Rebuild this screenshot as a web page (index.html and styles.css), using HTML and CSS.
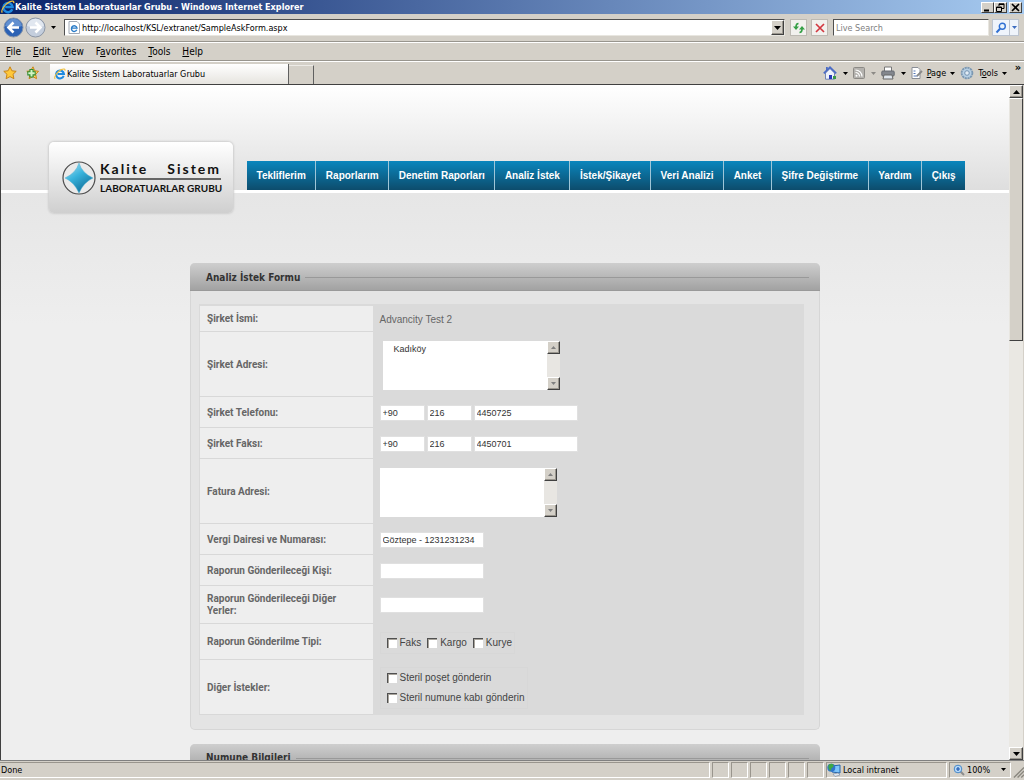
FILE: index.html
```html
<!DOCTYPE html>
<html lang="tr">
<head>
<meta charset="utf-8">
<title>Kalite Sistem Laboratuarlar Grubu</title>
<link rel="stylesheet" href="styles.css">
</head>
<body>
<svg class="defs" aria-hidden="true">
  <defs>
    <symbol id="ie" viewBox="0 0 14 14">
      <path d="M11.3 9.3A4.6 4.6 0 1 1 11.6 7H4.2" fill="none" stroke="#1d8ae0" stroke-width="2.4"/>
      <path d="M1.3 12.6C-.6 10.500 4 4 8.500 1.900c3-1.400 4.800-.9 4.200 1.300" fill="none" stroke="#f0c03c" stroke-width="1.300"/>
    </symbol>
    <symbol id="down" viewBox="0 0 7 4"><path d="M0 0h7L3.500 4z" fill="currentColor"/></symbol>
    <symbol id="up" viewBox="0 0 7 4"><path d="M0 4h7L3.500 0z" fill="currentColor"/></symbol>
  </defs>
</svg>

<header class="titlebar">
  <svg class="ico-14"><use href="#ie"/></svg>
  <span class="title-text">Kalite Sistem Laboratuarlar Grubu - Windows Internet Explorer</span>
  <button class="win-btn" aria-label="Minimize"><svg viewBox="0 0 11 9"><path d="M2 7.500h5" stroke="#000" stroke-width="2"/></svg></button>
  <button class="win-btn" aria-label="Restore"><svg viewBox="0 0 11 9"><path d="M4 3V.800h5v4.700H7M4 1.500h5M1.500 4h5v4.500h-5zM1.500 4.500h5" fill="none" stroke="#000"/></svg></button>
  <button class="win-btn win-close" aria-label="Close"><svg viewBox="0 0 11 9"><path d="M2 1l7 7M9 1L2 8" stroke="#000" stroke-width="1.600"/></svg></button>
</header>

<div class="addressbar">
  <button class="plain" aria-label="Back"><svg class="ico-21" viewBox="0 0 21 21"><circle cx="10.500" cy="10.500" r="9.500" fill="#2c62b4" stroke="#8494ac"/><path d="M2 9a8.600 8.600 0 0 1 17 0q-8 3-17 0z" fill="#86aee2" opacity=".6"/><path d="M16 10.500H6M10.500 5.500l-5 5 5 5" fill="none" stroke="#fff" stroke-width="2.600"/></svg></button>
  <button class="plain" aria-label="Forward"><svg class="ico-21" viewBox="0 0 21 21"><circle cx="10.500" cy="10.500" r="9.500" fill="#c4cedd" stroke="#8c96a6"/><path d="M2 9a8.600 8.600 0 0 1 17 0q-8 3-17 0z" fill="#eef2f8" opacity=".7"/><path d="M5 10.500h10M10.500 5.500l5 5-5 5" fill="none" stroke="#fff" stroke-width="2.600"/></svg></button>
  <button class="plain history" aria-label="Recent pages"><svg class="arrow-s"><use href="#down"/></svg></button>
  <div class="url-box">
    <svg class="ico-page" viewBox="0 0 12 13"><path d="M1 .500h8l2.500 2.500v9.500H1z" fill="#fff" stroke="#a0a8b4"/><path d="M8.800 8.800a2.800 2.800 0 1 1 .2-1.700H4" fill="none" stroke="#2a7cc8" stroke-width="1.400"/></svg>
    <input class="url" type="text" aria-label="Address" value="http://localhost/KSL/extranet/SampleAskForm.aspx">
    <button class="bevel url-drop" aria-label="Show addresses"><svg class="arrow"><use href="#down"/></svg></button>
  </div>
  <button class="tool-btn" aria-label="Refresh"><svg viewBox="0 0 12 12"><path d="M5.500 1.500Q3 1.500 3 5M6.500 10.500Q9 10.500 9 7" fill="none" stroke="#35a046" stroke-width="1.600"/><path d="M0 4.500h6L3 8zM6 7.500h6L9 4z" fill="#35a046"/></svg></button>
  <button class="tool-btn stop" aria-label="Stop"><svg viewBox="0 0 12 12"><path d="M2 2l8 8M10 2l-8 8" stroke="#d23840" stroke-width="1.700"/></svg></button>
  <input class="search" type="text" placeholder="Live Search" aria-label="Live Search">
  <div class="search-go">
    <button aria-label="Search"><svg viewBox="0 0 12 12"><circle cx="7.300" cy="4.300" r="3" fill="#e8f2fc" stroke="#2f6fd2" stroke-width="1.400"/><path d="M5 6.800L1.500 10.500" stroke="#2f6fd2" stroke-width="2"/></svg></button>
    <button class="go-drop" aria-label="Search options"><svg class="arrow-s"><use href="#down"/></svg></button>
  </div>
</div>

<nav class="menubar" aria-label="Browser menu">
  <button><u>F</u>ile</button><button><u>E</u>dit</button><button><u>V</u>iew</button><button>F<u>a</u>vorites</button><button><u>T</u>ools</button><button><u>H</u>elp</button>
</nav>

<div class="tabbar">
  <button class="plain star" aria-label="Favorites center"><svg class="ico-14" viewBox="0 0 14 14"><path d="M7 .800l1.900 4 4.300.5-3.200 3 .9 4.400L7 10.600l-3.900 2.100.9-4.400-3.200-3 4.300-.5z" fill="#ffc83a" stroke="#c98416"/></svg></button>
  <button class="plain star" aria-label="Add to favorites"><svg class="ico-14" viewBox="0 0 14 14"><path d="M8 .800l1.700 4 3.800.5-2.800 3 .8 4.400L8 10.600l-3.900 2.100.9-4.400-3.200-3 3.800-.5z" fill="#ffd768" stroke="#c98416"/><path d="M6.500 3v8.500M2.300 7.300h8.400" stroke="#2c8c30" stroke-width="4.200"/><path d="M6.500 4v6.500M3.300 7.300h6.400" stroke="#d4f4c4" stroke-width="2"/></svg></button>
  <button class="tab"><svg class="ico-12"><use href="#ie"/></svg>Kalite Sistem Laboratuarlar Grubu</button>
  <button class="new-tab" aria-label="New tab"></button>
  <div class="commands">
    <button class="cmd" aria-label="Home"><svg class="ico-14" viewBox="0 0 14 14"><path d="M2.500 7v6.200h9V7L7 2.500z" fill="#eef2fb" stroke="#7386b5"/><path d="M.800 7.300L7 1.300l6.200 6" fill="none" stroke="#4c6cc5" stroke-width="1.800"/><path d="M6 9h3v4H6z" fill="#2738ba"/><path d="M3 1h1.800v3L3 5z" fill="#4c6cc5"/><path d="M10 10h3v3h-3z" fill="#3c9a45"/></svg><svg class="arrow-s"><use href="#down"/></svg></button>
    <button class="cmd muted" aria-label="Feeds"><svg class="ico-12" viewBox="0 0 12 12"><rect x=".5" y=".5" width="11" height="11" rx="1" fill="#b4b2ae" stroke="#8c8a86"/><circle cx="3.500" cy="8.700" r="1" fill="#fff"/><path d="M2.500 5.500a4 4 0 0 1 4 4M2.500 3a6.500 6.500 0 0 1 6.500 6.500" fill="none" stroke="#fff" stroke-width="1.200"/></svg><svg class="arrow-s"><use href="#down"/></svg></button>
    <button class="cmd" aria-label="Print"><svg class="ico-14" viewBox="0 0 14 14"><path d="M3.500 5V1h7v4" fill="#fff" stroke="#777"/><rect x=".8" y="5" width="12.400" height="5" rx="1" fill="#83878e" stroke="#666a72"/><path d="M3 9h8l1 4H2z" fill="#dfe6ee" stroke="#666"/></svg><svg class="arrow-s"><use href="#down"/></svg></button>
    <button class="cmd page-cmd"><svg class="ico-12" viewBox="0 0 12 12"><path d="M1 .500h6l2 2v9H1z" fill="#fff" stroke="#8a8e96"/><path d="M2.500 4h2M2.500 6.500h2M2.500 9h4" stroke="#5577b5"/><path d="M6 9l5-5" stroke="#888" stroke-width="1.800"/></svg><span><u>P</u>age</span><svg class="arrow-s"><use href="#down"/></svg></button>
    <button class="cmd page-cmd"><svg class="ico-14" viewBox="0 0 14 14"><circle cx="7" cy="7" r="5.400" fill="#b6cfe4" stroke="#7c98b2" stroke-width="1.800" stroke-dasharray="2.200 .6"/><circle cx="7" cy="7" r="2.300" fill="#e2ecf5" stroke="#7593b0"/></svg><span>T<u>o</u>ols</span><svg class="arrow-s"><use href="#down"/></svg></button>
    <button class="plain more" aria-label="More commands">»</button>
  </div>
</div>

<div class="viewport">
  <div class="page">
    <div class="masthead">
      <div class="masthead-inner">
        <a class="logo" href="#" aria-label="Kalite Sistem Laboratuarlar Grubu">
          <svg class="logo-mark" viewBox="0 0 34 34">
            <defs><linearGradient id="gem" x1="0" y1="0" x2=".6" y2="1"><stop offset="0" stop-color="#b4e3f2"/><stop offset=".5" stop-color="#38b3dc"/><stop offset="1" stop-color="#12719c"/></linearGradient></defs>
            <circle cx="17" cy="17" r="16" fill="#eaeaea" stroke="#4b4b4b" stroke-width="1.200"/>
            <path d="M17 2Q20 12 31 17 22 21 17 32 12 21 3 17 14 12 17 2z" fill="url(#gem)" stroke="#54b5d4" stroke-width=".5"/>
          </svg>
          <span class="logo-words"><span class="logo-top"><span>Kalite</span><span>Sistem</span></span><span class="logo-bottom">LABORATUARLAR GRUBU</span></span>
        </a>
        <nav class="site-nav">
          <a href="#">Tekliflerim</a><a href="#">Raporlarım</a><a href="#">Denetim Raporları</a><a href="#">Analiz İstek</a><a href="#">İstek/Şikayet</a><a href="#">Veri Analizi</a><a href="#">Anket</a><a href="#">Şifre Değiştirme</a><a href="#">Yardım</a><a href="#">Çıkış</a>
        </nav>
      </div>
    </div>

    <main class="content">
      <section class="panel">
        <h2 class="panel-head">Analiz İstek Formu</h2>
        <form class="panel-body">
          <table class="form-table">
            <tr><th>Şirket İsmi:</th><td>Advancity Test 2</td></tr>
            <tr class="row-tall"><th><label for="adres">Şirket Adresi:</label></th><td>
              <div class="area area-inset"><textarea class="indented" id="adres">Kadıköy</textarea><div class="area-scroll"><button type="button" class="bevel" aria-label="Yukarı"><svg class="arrow-s"><use href="#up"/></svg></button><button type="button" class="bevel" aria-label="Aşağı"><svg class="arrow-s"><use href="#down"/></svg></button></div></div></td></tr>
            <tr class="row-mid"><th><label for="tel">Şirket Telefonu:</label></th><td><div class="phone"><input id="tel" class="code" value="+90"><input class="code" aria-label="Alan kodu" value="216"><input class="field" aria-label="Telefon" value="4450725"></div></td></tr>
            <tr class="row-mid"><th><label for="faks">Şirket Faksı:</label></th><td><div class="phone"><input id="faks" class="code" value="+90"><input class="code" aria-label="Alan kodu" value="216"><input class="field" aria-label="Faks" value="4450701"></div></td></tr>
            <tr class="row-tall"><th><label for="fatura">Fatura Adresi:</label></th><td>
              <div class="area"><textarea id="fatura"></textarea><div class="area-scroll"><button type="button" class="bevel" aria-label="Yukarı"><svg class="arrow-s"><use href="#up"/></svg></button><button type="button" class="bevel" aria-label="Aşağı"><svg class="arrow-s"><use href="#down"/></svg></button></div></div></td></tr>
            <tr class="row-mid"><th><label for="vergi">Vergi Dairesi ve Numarası:</label></th><td><input id="vergi" class="field" value="Göztepe - 1231231234"></td></tr>
            <tr class="row-mid"><th><label for="kisi">Raporun Gönderileceği Kişi:</label></th><td><input id="kisi" class="field"></td></tr>
            <tr class="row-two"><th><label for="diger">Raporun Gönderileceği Diğer Yerler:</label></th><td><input id="diger" class="field"></td></tr>
            <tr class="row-checks"><th>Raporun Gönderilme Tipi:</th><td><div class="checks"><label><input type="checkbox">Faks</label><label><input type="checkbox">Kargo</label><label><input type="checkbox">Kurye</label></div></td></tr>
            <tr class="row-stack"><th>Diğer İstekler:</th><td><div class="checks stacked"><label><input type="checkbox">Steril poşet gönderin</label><label><input type="checkbox">Steril numune kabı gönderin</label></div></td></tr>
          </table>
        </form>
      </section>
      <section class="panel">
        <h2 class="panel-head">Numune Bilgileri</h2>
      </section>
    </main>
  </div>
  <div class="scrollbar">
    <button class="bevel" aria-label="Scroll up"><svg class="arrow"><use href="#up"/></svg></button>
    <div class="thumb"></div>
    <div class="track"></div>
    <button class="bevel" aria-label="Scroll down"><svg class="arrow"><use href="#down"/></svg></button>
  </div>
</div>

<footer class="statusbar">
  <span class="cell cell-main">Done</span>
  <span class="cell"></span><span class="cell"></span><span class="cell"></span><span class="cell"></span><span class="cell"></span><span class="cell"></span>
  <span class="cell cell-zone"><svg class="ico-14" viewBox="0 0 14 14"><path d="M5 3l8-1v8l-8-1z" fill="#7cc4fa" stroke="#2464aa"/><path d="M6 11l5-1 2 2-5 1.500z" fill="#dfe6ee" stroke="#7888a0" stroke-width=".6"/><circle cx="4.300" cy="4.800" r="4" fill="#2f74cc"/><path d="M1.500 2q3-2 5-.5.5 3-2 3.500 0 2-1.500 3Q.500 5 1.500 2z" fill="#3fa845"/></svg>Local intranet</span>
  <button class="cell cell-zoom"><svg class="ico-12" viewBox="0 0 12 12"><path d="M7 7l4 4" stroke="#8c8c8c" stroke-width="2"/><circle cx="5" cy="5" r="3.800" fill="#b8daf8" stroke="#4788c8"/><path d="M5 3v4M3 5h4" stroke="#1d55b0" stroke-width="1.200"/></svg>100%<svg class="arrow-s"><use href="#down"/></svg></button>
  <svg class="grip" viewBox="0 0 12 12"><path d="M1 12L12 1M5 12l7-7M9 12l3-3" stroke="#8a877f" stroke-width="1.500"/></svg>
</footer>
</body>
</html>
```
FILE: styles.css
```css
* { box-sizing: border-box; }

body {
  margin: 0;
  height: 100vh;
  display: flex;
  flex-direction: column;
  overflow: hidden;
  background: #d4d0c8;
  color: #000;
  font: 9px/14px "DejaVu Sans Condensed", "DejaVu Sans", sans-serif;
}

button { font: inherit; color: inherit; margin: 0; padding: 0; border: 0; background: none; }
input, textarea { font: inherit; margin: 0; border: 0; border-radius: 0; }
svg { display: block; flex: none; }
.defs { position: absolute; width: 0; height: 0; }
.ico-12 { width: 12px; height: 12px; }
.ico-14 { width: 14px; height: 14px; }
.ico-21 { width: 21px; height: 21px; }
.ico-page { width: 12px; height: 13px; }
.arrow { width: 7px; height: 4px; }
.arrow-s { width: 5px; height: 3px; }

.bevel {
  display: flex;
  align-items: center;
  justify-content: center;
  background: #d4d0c8;
  border: 1px solid;
  border-color: #fff #404040 #404040 #fff;
  box-shadow: inset -1px -1px #9a968e;
}

/* Title bar */
.titlebar {
  flex: none;
  height: 14px;
  display: flex;
  align-items: center;
  padding: 0 2px 0 1px;
  background: linear-gradient(90deg, #0a246a, #a6caf0);
  color: #fff;
  font-weight: bold;
}
.title-text { flex: 1; white-space: nowrap; }
.win-btn {
  width: 13px;
  height: 11px;
  background: #d4d0c8;
  border: 1px solid;
  border-color: #fff #404040 #404040 #fff;
}
.win-btn svg { width: 11px; height: 9px; }
.win-close { margin-left: 2px; }

/* Address bar */
.addressbar {
  flex: none;
  height: 28px;
  display: flex;
  align-items: center;
  padding: 0 5px 0 2px;
  border-bottom: 1px solid #98958e;
}
.plain { display: flex; align-items: center; justify-content: center; }
.addressbar > .plain { width: 22px; }
.addressbar > .history { width: 15px; }
.url-box {
  flex: 1;
  height: 17px;
  display: flex;
  align-items: center;
  margin-left: 3px;
  padding-left: 3px;
  background: #fff;
  border: 1px solid;
  border-color: #505050 #e8e6e0 #e8e6e0 #505050;
}
.url { flex: 1; min-width: 0; padding: 0 0 0 2px; height: 14px; outline: 0; }
.url-drop { width: 13px; height: 15px; }
.tool-btn {
  width: 17px;
  height: 17px;
  margin-left: 5px;
  display: grid;
  place-items: center;
  background: #f2f1ee;
  border: 1px solid #bdbab3;
}
.tool-btn svg, .search-go svg { width: 12px; height: 12px; }
.tool-btn + .tool-btn { margin-left: 4px; }
.search {
  width: 156px;
  height: 17px;
  margin-left: 5px;
  padding: 0 2px;
  border: 1px solid;
  border-color: #505050 #e8e6e0 #e8e6e0 #505050;
}
.search::placeholder { color: #808080; opacity: 1; }
.search-go {
  height: 17px;
  margin-left: 3px;
  display: flex;
  background: #eff4fb;
  border: 1px solid #bcc4d0;
  color: #3c6cc0;
}
.search-go button { width: 16px; display: grid; place-items: center; }
.search-go .go-drop { width: 9px; border-left: 1px solid #bcc4d0; }
.search-go .arrow-s { width: 5px; height: 3px; }

/* Menu bar */
.menubar {
  flex: none;
  height: 19px;
  display: flex;
  align-items: center;
  gap: 12px;
  padding: 0 6px;
  border-top: 1px solid #fff;
  border-bottom: 1px solid #98958e;
}

/* Tabs and command bar */
.tabbar {
  flex: none;
  height: 23px;
  display: flex;
  align-items: flex-end;
  padding-left: 3px;
  border-top: 1px solid #fff;
}
.star { width: 14px; height: 22px; margin-right: 8px; }
.tab {
  width: 239px;
  height: 20px;
  margin-left: 3px;
  display: flex;
  align-items: center;
  gap: 1px;
  padding-left: 4px;
  background: linear-gradient(#fff, #e6e4df);
  border-right: 1px solid #606060;
}
.new-tab {
  width: 25px;
  height: 19px;
  border-top: 1px solid #eceae6;
  border-right: 1px solid #606060;
}
.commands { flex: 1; height: 22px; display: flex; justify-content: flex-end; align-items: center; gap: 5px; }
.cmd { display: flex; align-items: center; gap: 6px; }
.page-cmd { gap: 4px; }
.muted { color: #8c8a86; }
.more { align-self: flex-start; width: 12px; height: 12px; font-size: 11px; font-weight: bold; }

.menubar { font-size: 10px; }

/* Page area */
.viewport {
  flex: 1;
  min-height: 0;
  display: flex;
  border: 1px solid #404040;
  border-width: 1px 0 0 1px;
}
.page {
  flex: 1;
  min-width: 0;
  overflow: hidden;
  background: linear-gradient(#e6e6e6 108px, #eee 240px);
  font-family: "Liberation Sans", Arial, sans-serif;
}
.scrollbar { width: 15px; display: flex; flex-direction: column; background: #eae8e3; border-right: 1px solid #d4d0c8; }
.scrollbar .bevel { height: 13px; flex: none; }
.thumb {
  flex: 0 0 36%;
  background: #d4d0c8;
  border: 1px solid;
  border-color: #fff #404040 #404040 #e8e6e0;
}
.track { flex: 1; }

.masthead {
  height: 108px;
  background: linear-gradient(#fff, #dedede);
  border-bottom: 3px solid #fff;
}
.masthead-inner {
  max-width: 920px;
  margin: 0 auto;
  padding: 57px 0 0 4px;
  display: flex;
  align-items: flex-start;
}
.logo {
  flex: none;
  width: 184px;
  height: 71px;
  display: flex;
  align-items: center;
  gap: 4px;
  padding-left: 13px;
  border-radius: 5px;
  background: linear-gradient(#fff, #cfcfcf);
  box-shadow: 0 0 2px 1px #cfcfcf;
  color: #111;
  text-decoration: none;
}
.logo-mark { width: 34px; height: 34px; }
.logo-words { width: 121px; font-family: Lato, "Open Sans", sans-serif; font-weight: bold; white-space: nowrap; }
.logo-top {
  display: flex;
  justify-content: space-between;
  font-size: 14px;
  line-height: 18px;
  letter-spacing: 2px;
  border-bottom: 2px solid #666;
}
.logo-bottom { display: block; font-size: 10px; line-height: 16px; }

.site-nav { flex: 1; display: flex; margin: 19px 0 0 14px; }
.site-nav a {
  flex: 1 0 auto;
  height: 29px;
  padding: 0 8px;
  text-align: center;
  background: linear-gradient(#0a86bd, #0d4c6c);
  border-right: 1px solid #9fc6d8;
  color: #fff;
  font-size: 10px;
  font-weight: bold;
  line-height: 29px;
  text-decoration: none;
  white-space: nowrap;
}
.site-nav a:last-child { border-right: 0; }

/* Form panels */
.content { max-width: 630px; margin: 0 auto; padding-top: 70px; }
.panel {
  margin-bottom: 14px;
  background: #e4e4e4;
  border: 1px solid #d6d6d6;
  border-top: 0;
  border-radius: 5px;
}
.panel-head {
  height: 28px;
  margin: 0 -1px;
  padding: 2px 11px 0 16px;
  display: flex;
  align-items: center;
  gap: 5px;
  border-radius: 5px 5px 0 0;
  background: linear-gradient(#cecece, #a2a2a2);
  border-bottom: 1px solid #999;
  color: #333;
  font: bold 10px/14px "DejaVu Sans Condensed", "DejaVu Sans", sans-serif;
}
.panel-head::after { content: ""; flex: 1; height: 1px; background: #999; }
.panel-body { padding: 13px 15px 14px 8px; }
.form-table {
  width: 100%;
  border-collapse: collapse;
  background: #dadada;
  border: 1px solid #dadada;
  border-top-width: 2px;
  color: #666;
  font-size: 10px;
}
.form-table th, .form-table td { height: 26px; padding: 0 7px; text-align: left; }
.form-table td { padding-top: 2px; }
.form-table th {
  width: 173px;
  padding-top: 2px;
  background: #eee;
  border-bottom: 1px solid #d8d8d8;
  font-family: Roboto, "Liberation Sans", sans-serif;
  font-weight: bold;
  line-height: 12px;
}
.form-table .row-tall > * { height: 65px; }
.form-table .row-mid > * { height: 31px; }
.form-table .row-two > * { height: 38px; }
.form-table .row-checks > * { height: 36px; }
.form-table .row-stack > * { height: 55px; }
.form-table .row-tall td, .form-table .row-checks td, .form-table .row-stack td { padding-top: 4px; }
.form-table input, .form-table textarea { color: #333; font-size: 9px; }
.area { width: 177px; height: 49px; display: flex; }
.area-inset { margin-left: 3px; }
.area textarea { flex: 1; min-width: 0; padding: 3px 2px; line-height: 10px; background: #fff; resize: none; overflow: hidden; }
.area .indented { padding-left: 11px; }
.area-scroll { width: 13px; display: flex; flex-direction: column; justify-content: space-between; background: #e8e6e2; color: #808080; }
.area-scroll .bevel { height: 13px; }
.phone { display: flex; gap: 2px; }
.field, .code { height: 16px; padding: 1px 2px; background: #fff; border: 1px solid #e0e0e0; }
.field { width: 104px; }
.code { width: 45px; }
.field, .code, .area textarea { outline: 0; }
.checks { display: inline-flex; gap: 6px; padding: 3px 2px 3px 6px; border: 1px solid #d7d7d7; color: #444; vertical-align: middle; }
.checks label { display: flex; align-items: center; gap: 3px; white-space: nowrap; }
.stacked { flex-direction: column; }
.checks input {
  appearance: none;
  width: 10px;
  height: 10px;
  background: #fff;
  border: solid #505050;
  border-width: 1px 0 0 1px;
  box-shadow: inset 1px 1px #a8a49c;
}

/* Status bar */
.statusbar {
  flex: none;
  height: 20px;
  display: flex;
  align-items: center;
  gap: 2px;
  padding: 0 0 2px;
  border-top: 1px solid #808080;
  white-space: nowrap;
}
.cell {
  width: 17px;
  height: 16px;
  display: flex;
  align-items: center;
  border: 1px solid;
  border-color: #99958d #fff #fff #99958d;
}
.cell-main { flex: 1; border-left: 0; padding-left: 1px; }
.cell-zone { width: 121px; gap: 2px; }
.cell-zoom { width: 62px; gap: 2px; padding-left: 3px; }
.cell-zoom .arrow-s { margin-left: auto; margin-right: 4px; }
.grip { width: 11px; height: 12px; align-self: flex-end; }
```
